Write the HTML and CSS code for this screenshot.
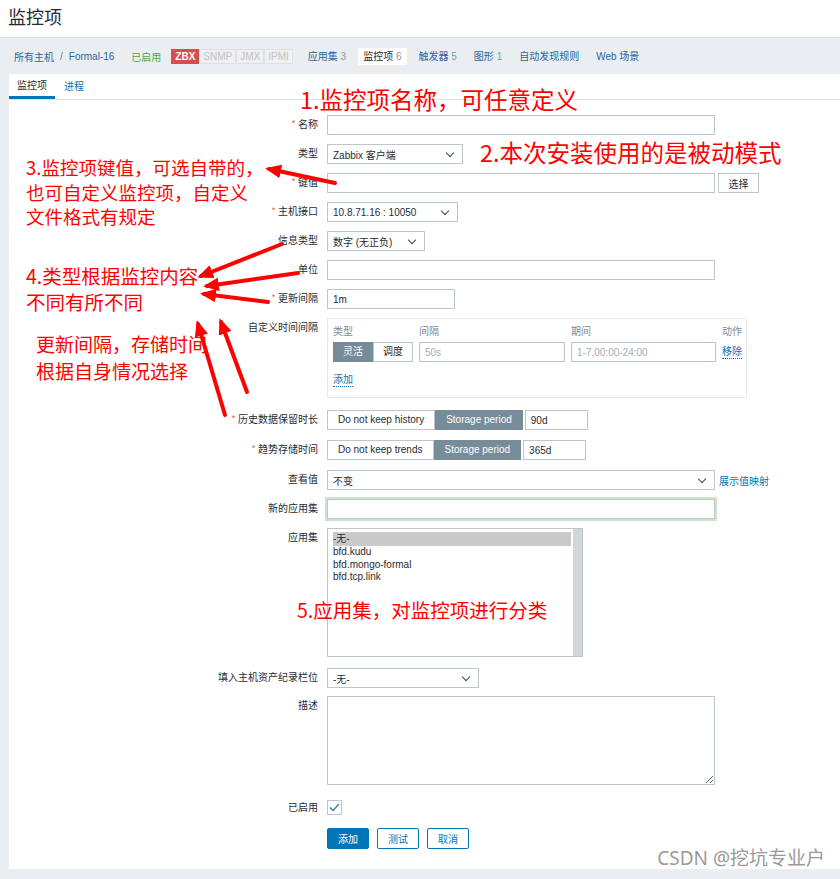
FILE: index.html
```html
<!DOCTYPE html>
<html lang="zh">

<head>
    <meta charset="UTF-8">
    <meta name="viewport" content="width=device-width, initial-scale=1.0">
    <title>监控项</title>
    <link rel="stylesheet" href="styles.css">
</head>

<body>
    <!-- 页面标题 -->
    <header class="title-bar">
        <h1>监控项</h1>
    </header>

    <!-- 主机导航 -->
    <nav class="host-nav">
        <a class="nav-text">所有主机</a>
        <span class="sep">/</span>
        <a class="nav-text">Formal-16</a>
        <span class="status">已启用</span>
        <div class="badges">
            <span class="badge zbx">ZBX</span>
            <span class="badge">SNMP</span>
            <span class="badge">JMX</span>
            <span class="badge">IPMI</span>
        </div>
        <ul class="nav-links">
            <li><a class="nav-text">应用集</a> <span class="count">3</span></li>
            <li class="current">监控项 <span class="count">6</span></li>
            <li><a class="nav-text">触发器</a> <span class="count">5</span></li>
            <li><a class="nav-text">图形</a> <span class="count">1</span></li>
            <li><a class="nav-text">自动发现规则</a></li>
            <li><a class="nav-text">Web 场景</a></li>
        </ul>
    </nav>

    <main class="panel">
        <div class="tabs">
            <span class="tab active">监控项</span>
            <span class="tab">进程</span>
        </div>

        <form class="item-form">
            <div class="row">
                <label class="lbl"><em>*</em> 名称</label>
                <div class="ctrl"><input type="text" class="input wide"></div>
            </div>
            <div class="row">
                <label class="lbl">类型</label>
                <div class="ctrl"><div class="select sel-type">Zabbix 客户端</div></div>
            </div>
            <div class="row">
                <label class="lbl"><em>*</em> 键值</label>
                <div class="ctrl">
                    <input type="text" class="input wide">
                    <button type="button" class="btn-plain">选择</button>
                </div>
            </div>
            <div class="row">
                <label class="lbl"><em>*</em> 主机接口</label>
                <div class="ctrl"><div class="select sel-iface">10.8.71.16 : 10050</div></div>
            </div>
            <div class="row">
                <label class="lbl">信息类型</label>
                <div class="ctrl"><div class="select sel-info">数字 (无正负)</div></div>
            </div>
            <div class="row">
                <label class="lbl">单位</label>
                <div class="ctrl"><input type="text" class="input wide"></div>
            </div>
            <div class="row">
                <label class="lbl"><em>*</em> 更新间隔</label>
                <div class="ctrl"><input type="text" class="input short" value="1m"></div>
            </div>
            <div class="row row-box">
                <label class="lbl">自定义时间间隔</label>
                <div class="ctrl">
                    <div class="interval-box">
                        <div class="iv-grid">
                            <span class="iv-head">类型</span>
                            <span class="iv-head">间隔</span>
                            <span class="iv-head">期间</span>
                            <span class="iv-head">动作</span>
                            <div class="seg">
                                <span class="on">灵活</span>
                                <span>调度</span>
                            </div>
                            <input type="text" class="input" placeholder="50s">
                            <input type="text" class="input" placeholder="1-7,00:00-24:00">
                            <a class="link dotted">移除</a>
                        </div>
                        <a class="link dotted add-link">添加</a>
                    </div>
                </div>
            </div>
            <div class="row row-store">
                <label class="lbl"><em>*</em> 历史数据保留时长</label>
                <div class="ctrl">
                    <div class="seg">
                        <span>Do not keep history</span>
                        <span class="on">Storage period</span>
                    </div>
                    <input type="text" class="input store" value="90d">
                </div>
            </div>
            <div class="row row-store">
                <label class="lbl"><em>*</em> 趋势存储时间</label>
                <div class="ctrl">
                    <div class="seg">
                        <span>Do not keep trends</span>
                        <span class="on">Storage period</span>
                    </div>
                    <input type="text" class="input store" value="365d">
                </div>
            </div>
            <div class="row">
                <label class="lbl">查看值</label>
                <div class="ctrl">
                    <div class="select wide">不变</div>
                    <a class="link map-link">展示值映射</a>
                </div>
            </div>
            <div class="row row-newapp">
                <label class="lbl">新的应用集</label>
                <div class="ctrl"><input type="text" class="input wide focus"></div>
            </div>
            <div class="row row-list">
                <label class="lbl">应用集</label>
                <div class="ctrl">
                    <div class="listbox">
                        <ul class="list-items">
                            <li class="picked">-无-</li>
                            <li>bfd.kudu</li>
                            <li>bfd.mongo-formal</li>
                            <li>bfd.tcp.link</li>
                        </ul>
                        <div class="scroll"></div>
                    </div>
                </div>
            </div>
            <div class="row row-inv">
                <label class="lbl">填入主机资产纪录栏位</label>
                <div class="ctrl"><div class="select sel-inv">-无-</div></div>
            </div>
            <div class="row row-desc">
                <label class="lbl">描述</label>
                <div class="ctrl"><textarea class="desc"></textarea></div>
            </div>
            <div class="row row-check">
                <label class="lbl">已启用</label>
                <div class="ctrl">
                    <span class="check">
                        <svg width="11" height="9" viewBox="0 0 11 9"><polyline points="1,4.5 4,7.5 10,1" fill="none" stroke="#2a7ec0" stroke-width="1.4"/></svg>
                    </span>
                </div>
            </div>
            <div class="row row-btns">
                <span class="lbl"></span>
                <div class="ctrl btns">
                    <button type="button" class="btn primary">添加</button>
                    <button type="button" class="btn">测试</button>
                    <button type="button" class="btn">取消</button>
                </div>
            </div>
        </form>
    </main>

    <!-- 标注 -->
    <p class="note n1">1.监控项名称，可任意定义</p>
    <p class="note n2">2.本次安装使用的是被动模式</p>
    <p class="note n3">3.监控项键值，可选自带的，<br>也可自定义监控项，自定义<br>文件格式有规定</p>
    <p class="note n4">4.类型根据监控内容<br>不同有所不同</p>
    <p class="note n5">更新间隔，存储时间<br>根据自身情况选择</p>
    <p class="note n6">5.应用集，对监控项进行分类</p>

    <svg class="arrows" width="840" height="879" viewBox="0 0 840 879">
        <defs>
            <marker id="head" markerWidth="4" markerHeight="3.4" refX="3" refY="1.7" orient="auto" markerUnits="strokeWidth">
                <polygon points="0,0 4,1.7 0,3.4" fill="#ff0000"/>
            </marker>
        </defs>
        <g stroke="#ff0000" stroke-width="4" stroke-linecap="round" marker-end="url(#head)">
            <line x1="335" y1="183" x2="269" y2="169"/>
            <line x1="282" y1="244" x2="201" y2="276"/>
            <line x1="298" y1="273" x2="207" y2="286"/>
            <line x1="268" y1="302" x2="204" y2="294"/>
            <line x1="225" y1="415" x2="198" y2="324"/>
            <line x1="247" y1="392" x2="221" y2="322"/>
        </g>
    </svg>

    <div class="watermark">CSDN @挖坑专业户</div>
</body>

</html>
```

FILE: styles.css
```css
* {
    margin: 0;
    padding: 0;
    box-sizing: border-box;
}

body {
    font-family: "Liberation Sans", Arial, "Noto Sans CJK SC", sans-serif;
    font-size: 10px;
    color: #1f2c33;
    background-color: #ebeef0;
    min-height: 879px;
    position: relative;
}

a {
    cursor: pointer;
}

/* 标题 */
.title-bar {
    background-color: #fff;
    height: 38px;
    padding-left: 8px;
    border-bottom: 1px solid #dde2e5;
}

.title-bar h1 {
    font-size: 18px;
    font-weight: normal;
    line-height: 37px;
    color: #1f2c33;
}

/* 主机导航 */
.host-nav {
    height: 36px;
    display: flex;
    align-items: center;
    padding-left: 14px;
    font-size: 10px;
}

.nav-text {
    color: #2a64a0;
}

.sep {
    color: #5e7a94;
    margin: 0 6px;
}

.status {
    color: #4ea64e;
    margin-left: 17px;
}

.badges {
    display: flex;
    margin-left: 10px;
}

.badge {
    height: 15px;
    line-height: 13px;
    padding: 0 3px;
    border: 1px solid #dde1e4;
    background-color: #eef0f1;
    color: #bcc3c8;
}

.badge.zbx {
    background-color: #d64e4e;
    border-color: #d64e4e;
    color: #fff;
    font-weight: bold;
}

.nav-links {
    list-style: none;
    display: flex;
    gap: 7px;
    margin-left: 10px;
}

.nav-links li {
    padding: 0 5px;
    height: 17px;
    line-height: 17px;
}

.nav-links li.current {
    background-color: #fff;
    color: #1f2c33;
}

.count {
    color: #7f95a8;
}

/* 面板 */
.panel {
    margin-left: 9px;
    background-color: #fff;
    padding-bottom: 11px;
}

.tabs {
    display: flex;
    height: 26px;
    border-bottom: 1px solid #dfe4e7;
}

.tab {
    padding: 0 8px 0 8px;
    line-height: 25px;
    color: #0275b8;
    margin-right: 1px;
}

.tab.active {
    color: #1f2c33;
    border-bottom: 3px solid #0275b8;
    line-height: 24px;
}

/* 表单 */
.item-form {
    padding-top: 15px;
}

.row {
    display: grid;
    grid-template-columns: 309px 1fr;
    column-gap: 9px;
    align-items: start;
    margin-bottom: 9px;
}

.lbl {
    display: block;
    height: 20px;
    text-align: right;
    line-height: 20px;
    color: #1f2c33;
    white-space: nowrap;
}

.lbl em {
    font-style: normal;
    color: #e45959;
    font-size: 9px;
    position: relative;
    top: -2px;
}

.ctrl {
    display: flex;
    align-items: center;
    height: 20px;
}

.row-box {
    margin-bottom: 12px;
}

.row-store {
    margin-bottom: 10px;
}

.row-newapp {
    margin-bottom: 9px;
}

.row-list {
    margin-bottom: 11px;
}

.row-inv {
    margin-bottom: 8px;
}

.row-desc {
    margin-bottom: 15px;
}

.row-check {
    margin-bottom: 13px;
}

.row-check .lbl,
.row-check .ctrl {
    height: 15px;
    line-height: 15px;
}

.row-box .ctrl,
.row-list .ctrl,
.row-desc .ctrl {
    align-items: flex-start;
    height: auto;
}

.row-btns .ctrl {
    height: 21px;
}

.input {
    height: 20px;
    border: 1px solid #bcc6cc;
    padding: 0 5px;
    font-family: inherit;
    font-size: 10px;
    color: #1f2c33;
    background-color: #fff;
    outline: none;
}

.input::placeholder {
    color: #a3acb2;
}

.wide {
    width: 388px;
}

.short {
    width: 128px;
}

.store {
    width: 63px;
    margin-left: 2px;
}

.input.focus {
    box-shadow: 0 0 0 2px #cce6cc;
}

.select {
    height: 20px;
    border: 1px solid #bcc6cc;
    padding: 0 9px 0 5px;
    display: flex;
    align-items: center;
    justify-content: space-between;
    background-color: #fff;
}

.select::after {
    content: "";
    width: 5px;
    height: 5px;
    border-right: 1.3px solid #3b4750;
    border-bottom: 1.3px solid #3b4750;
    transform: rotate(45deg);
    margin-top: -3px;
}

.sel-type {
    width: 136px;
}

.sel-iface {
    width: 131px;
}

.sel-info {
    width: 98px;
}

.sel-inv {
    width: 152px;
}

.btn-plain {
    margin-left: 3px;
    width: 41px;
    height: 20px;
    border: 1px solid #bcc6cc;
    background-color: #fff;
    font-family: inherit;
    font-size: 10px;
    color: #1f2c33;
}

.link {
    color: #0275b8;
    white-space: nowrap;
}

.dotted {
    border-bottom: 1px dotted #0275b8;
    line-height: 12px;
}

.map-link {
    margin-left: 4px;
}

/* 自定义时间间隔 */
.interval-box {
    width: 420px;
    height: 80px;
    border: 1px solid #e4e9ec;
    padding: 5px 4px 5px 5px;
}

.iv-grid {
    display: grid;
    grid-template-columns: 80px 146px 145px 1fr;
    column-gap: 6px;
    row-gap: 3px;
    align-items: center;
}

.iv-head {
    color: #7d8b93;
    line-height: 15px;
    white-space: nowrap;
}

.iv-grid .input {
    width: 100%;
}

.add-link {
    display: inline-block;
    margin-top: 12px;
}

.seg {
    display: flex;
}

.seg span {
    height: 20px;
    line-height: 18px;
    padding: 0 10px;
    border: 1px solid #bcc6cc;
    color: #1f2c33;
    white-space: nowrap;
}

.seg span.on {
    background-color: #768d99;
    border-color: #768d99;
    color: #fff;
}

.iv-grid .seg span {
    width: 40px;
    padding: 0;
    text-align: center;
}

/* 应用集列表 */
.listbox {
    width: 256px;
    height: 129px;
    border: 1px solid #bcc6cc;
    display: flex;
}

.list-items {
    flex: 1;
    list-style: none;
    padding: 3px 2px 0 5px;
}

.list-items li {
    line-height: 12.5px;
    color: #1f2c33;
}

.list-items li.picked {
    background-color: #cacaca;
    line-height: 14px;
}

.scroll {
    width: 9px;
    background-color: #cfd7db;
}

.desc {
    display: block;
    width: 388px;
    height: 89px;
    border: 1px solid #bcc6cc;
    outline: none;
    font-family: inherit;
}

.check {
    width: 15px;
    height: 15px;
    border: 1px solid #bcc6cc;
    display: flex;
    align-items: center;
    justify-content: center;
}

.btns {
    gap: 8px;
}

.btn {
    width: 42px;
    height: 21px;
    border: 1px solid #0275b8;
    background-color: #fff;
    color: #0275b8;
    font-family: inherit;
    font-size: 10px;
    border-radius: 2px;
}

.btn.primary {
    background-color: #0275b8;
    color: #fff;
}

/* 红色标注 */
.note {
    position: absolute;
    color: #ff0000;
    font-family: "Noto Sans CJK SC", "Noto Sans", sans-serif;
    white-space: nowrap;
}

.n1 {
    left: 300px;
    top: 85px;
    font-size: 23.5px;
    line-height: 28px;
}

.n2 {
    left: 480px;
    top: 138px;
    font-size: 23.5px;
    line-height: 28px;
}

.n3 {
    left: 26px;
    top: 155px;
    font-size: 18.5px;
    line-height: 24.5px;
}

.n4 {
    left: 26px;
    top: 263px;
    font-size: 19.5px;
    line-height: 26px;
}

.n5 {
    left: 36px;
    top: 330px;
    font-size: 19px;
    line-height: 27px;
}

.n6 {
    left: 297px;
    top: 598px;
    font-size: 19.5px;
    line-height: 24px;
}

.arrows {
    position: absolute;
    left: 0;
    top: 0;
    pointer-events: none;
}

.watermark {
    position: absolute;
    right: 15px;
    top: 846px;
    font-family: "Noto Sans", "Noto Sans CJK SC", sans-serif;
    font-size: 19px;
    line-height: 24px;
    color: #9a9a9a;
    text-shadow: 0 0 2px #fff;
}
```
